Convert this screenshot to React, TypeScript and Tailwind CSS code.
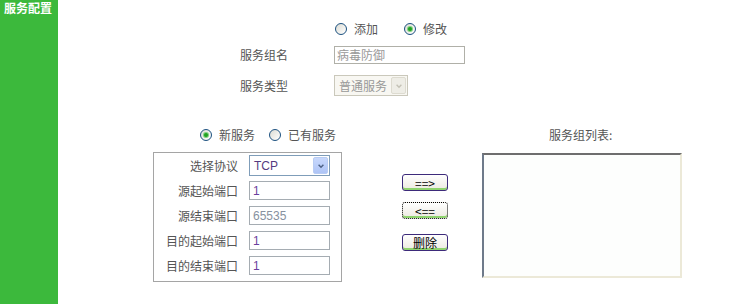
import React from "react";

const font = "font-['Noto_Sans_CJK_SC','Noto_Sans',sans-serif]";

function Radio({ checked, label }: { checked?: boolean; label: string }) {
    return (
        <label className="flex items-center gap-[7px]">
            <span className="w-[12px] h-[12px] rounded-full border border-[#1c5180] bg-gradient-to-br from-[#dcdcd4] to-white flex items-center justify-center">
                {checked && (
                    <span className="w-[4px] h-[4px] rounded-full bg-[#21a121] shadow-[0_0_0_1px_#7fd07f]" />
                )}
            </span>
            <span className="text-[12px] leading-[14px] text-[#555]">{label}</span>
        </label>
    );
}

function Chevron({ color }: { color: string }) {
    return (
        <svg viewBox="0 0 10 10" className="w-[8px] h-[8px]">
            <path d="M2 3.5 L5 6.5 L8 3.5" fill="none" stroke={color} strokeWidth="1.8" />
        </svg>
    );
}

function Field({ label, value, color }: { label: string; value: string; color: string }) {
    return (
        <div className="h-[25px] flex items-center">
            <div className="w-[84px] text-right text-[12px] leading-[14px] text-[#555]">{label}</div>
            <div className="ml-[11px] w-[81px] h-[19px] border border-[#a5acb2] bg-white flex items-center px-[3px]">
                <span className="text-[12px] leading-none font-['Liberation_Sans',sans-serif]" style={{ color }}>
                    {value}
                </span>
            </div>
        </div>
    );
}

function XpButton({ children, focused }: { children: React.ReactNode; focused?: boolean }) {
    return (
        <button
            className={`w-[46px] h-[17px] rounded-[3px] border ${
                focused ? "border-dotted border-black" : "border-[#3d2a7a]"
            } bg-gradient-to-b from-white to-[#ece9e0] shadow-[inset_0_-2px_0_#8fd36e] text-[12px] leading-none text-black flex items-center justify-center`}
        >
            {children}
        </button>
    );
}

export default function App() {
    return (
        <div className={`flex w-[733px] h-[304px] bg-white ${font}`}>
            <div className="w-[58px] shrink-0 h-full bg-[#3cb93c] pt-[1px]">
                <div className="pl-[4px] text-[12px] leading-[13px] font-bold text-white whitespace-nowrap">
                    服务配置
                </div>
            </div>

            <div className="flex-1">
                {/* top form */}
                <div className="pl-[182px]">
                    <div className="mt-[22px] h-[14px] flex items-center pl-[95px] gap-[26px]">
                        <Radio label="添加" />
                        <Radio checked label="修改" />
                    </div>
                    <div className="mt-[10px] h-[18px] flex items-center">
                        <div className="w-[94px] text-[12px] leading-[14px] text-[#555]">服务组名</div>
                        <div className="w-[131px] h-[18px] border border-[#b0b0a8] bg-white flex items-center px-[2px]">
                            <span className="text-[12px] leading-none text-[#999]">病毒防御</span>
                        </div>
                    </div>
                    <div className="mt-[11px] h-[21px] flex items-center">
                        <div className="w-[94px] text-[12px] leading-[14px] text-[#555]">服务类型</div>
                        <div className="w-[74px] h-[21px] border border-[#cac8bb] bg-[#f8f7f2] flex items-center justify-between pl-[4px] pr-[1px]">
                            <span className="text-[12px] leading-none text-[#999]">普通服务</span>
                            <span className="w-[15px] h-[17px] bg-[#eeede6] border border-[#dddbd0] rounded-[2px] flex items-center justify-center">
                                <Chevron color="#c4c2b6" />
                            </span>
                        </div>
                    </div>
                </div>

                {/* bottom part */}
                <div className="mt-[32px] flex items-start">
                    <div className="ml-[95px] w-[189px]">
                        <div className="h-[14px] flex items-center pl-[47px] gap-[14px]">
                            <Radio checked label="新服务" />
                            <Radio label="已有服务" />
                        </div>
                        <div className="mt-[10px] w-[189px] border border-[#a5a5a5] pb-[3px]">
                            <div className="h-[25px] flex items-center">
                                <div className="w-[84px] text-right text-[12px] leading-[14px] text-[#555]">选择协议</div>
                                <div className="ml-[11px] w-[81px] h-[21px] border border-[#7f9db9] bg-white flex items-center justify-between pl-[4px] pr-[1px]">
                                    <span className="text-[12px] leading-none text-[#553a80] font-['Liberation_Sans',sans-serif]">TCP</span>
                                    <span className="w-[15px] h-[17px] rounded-[2px] bg-gradient-to-b from-[#c8d8fc] to-[#aec4f6] border border-[#b8ccf4] flex items-center justify-center">
                                        <Chevron color="#4d6185" />
                                    </span>
                                </div>
                            </div>
                            <Field label="源起始端口" value="1" color="#6a3f9e" />
                            <Field label="源结束端口" value="65535" color="#8791a0" />
                            <Field label="目的起始端口" value="1" color="#6a3f9e" />
                            <Field label="目的结束端口" value="1" color="#6a3f9e" />
                        </div>
                    </div>

                    <div className="ml-[60px] pt-[46px] flex flex-col">
                        <XpButton>==&gt;</XpButton>
                        <div className="mt-[11px]">
                            <XpButton focused>&lt;==</XpButton>
                        </div>
                        <div className="mt-[15px]">
                            <XpButton>删除</XpButton>
                        </div>
                    </div>

                    <div className="ml-[34px] w-[200px] flex flex-col">
                        <div className="h-[14px] pl-[67px] text-[12px] leading-[14px] text-[#555]">服务组列表:</div>
                        <div className="mt-[11px] w-[200px] h-[125px] bg-[#fdfefd] border-2 border-t-[#6e6e6e] border-l-[#6e7a8a] border-r-[#ece9d8] border-b-[#ece9d8]" />
                    </div>
                </div>
            </div>
        </div>
    );
}
